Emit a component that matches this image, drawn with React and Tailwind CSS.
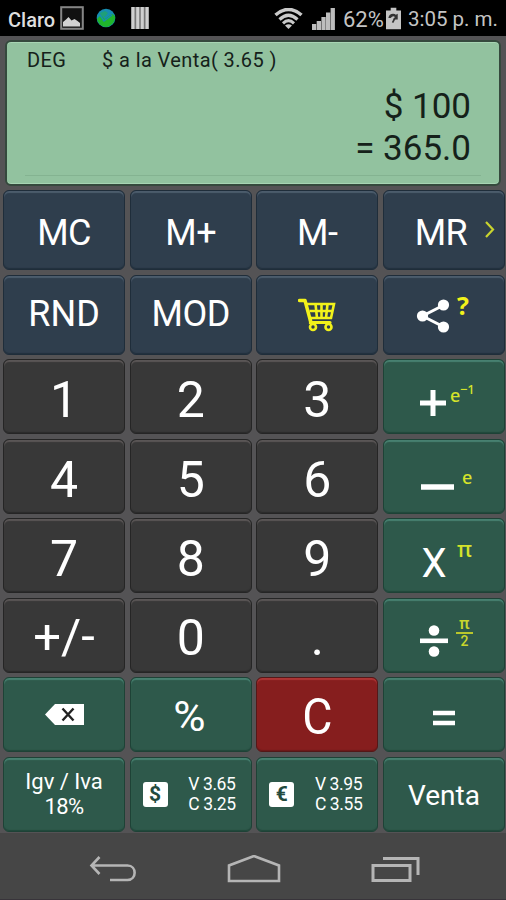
import React from 'react';
import clsx from 'clsx';

const KEY_STYLES = {
  blue: 'bg-[#2f3e4d] border-[#1f2d3a] shadow-[inset_0_2px_1px_#4c5c6c,inset_0_-1px_1px_#22303d]',
  dark: 'bg-[#383838] border-[#252525] shadow-[inset_0_2px_1px_#5a5656,inset_0_-1px_1px_#2b2b2b]',
  green: 'bg-[#2e594b] border-[#1e4236] shadow-[inset_0_2px_1px_#478070,inset_0_-1px_1px_#21473b]',
  red: 'bg-[#861e1e] border-[#541818] shadow-[inset_0_2px_1px_#ad3535,inset_0_-1px_1px_#6b1919]',
};

function Key({ tone, className, children }) {
  return (
    <button
      type="button"
      className={clsx(
        'relative flex items-center justify-center rounded-[6px] border text-white leading-none whitespace-nowrap',
        KEY_STYLES[tone],
        className
      )}
    >
      {children}
    </button>
  );
}

function StatusBar() {
  return (
    <header className="h-[36px] shrink-0 bg-black flex items-center text-[#c4c4c4] pt-[3px] pl-[8px] pr-[8px]">
      <span className="w-[47px] text-[20px] font-medium text-[#dedede] leading-none">Claro</span>
      <svg className="ml-[5px] mb-[3px]" width="24" height="24" viewBox="0 0 24 24">
        <rect x="1.2" y="1.2" width="21.6" height="21.6" fill="#111" stroke="#858585" strokeWidth="2" />
        <path d="M3 20.5v-4.500l3-2.500 2.500-2.500 3 3.500 3-1.500 3 2 2.500 2v3.500z" fill="#d2d2d2" />
      </svg>
      <svg className="ml-[12px] mb-[3px]" width="20" height="20" viewBox="0 0 20 20">
        <circle cx="10" cy="10" r="9.300" fill="#168db0" />
        <path d="M1 11l4-4 4 4 7-5 3 2c1 5-4 11-9 11-5 0-8-4-9-8z" fill="#20b52c" />
        <path d="M4 5l5-2 3 2-3 4-4-1z" fill="#1f9f78" />
        <path d="M4 7l4 6 8-6" fill="none" stroke="#168db0" strokeWidth="1.500" />
      </svg>
      <svg className="ml-[15px] mb-[3px]" width="19" height="22" viewBox="0 0 19 22">
        <rect width="18" height="22" fill="#777" />
        <path d="M2 0v22M6.700 0v22M11.300 0v22M16 0v22" stroke="#d0d0d0" strokeWidth="3" />
      </svg>
      <div className="flex-1" />
      <svg className="mr-[1px] mb-[2px]" width="29" height="22" viewBox="0 0 29 22" fill="none" stroke="#c9c9c9">
        <path d="M1.500 7Q14.500-4 27.500 7" strokeWidth="3.600" />
        <path d="M5.500 11.500Q14.500 3 23.500 11.500" strokeWidth="3.200" />
        <path d="M9 15.300Q14.500 10 20 15.300" strokeWidth="3" />
        <path d="M11 17.500Q14.500 15 18 17.500L14.500 21z" fill="#c9c9c9" stroke="none" />
      </svg>
      <svg className="ml-[8px] mb-[2px]" width="23" height="22" viewBox="0 0 23 22" fill="#bdbdbd">
        <rect x="0" y="16" width="4.300" height="6" />
        <rect x="4.700" y="13" width="4.300" height="9" />
        <rect x="9.400" y="9" width="4.300" height="13" />
        <rect x="14" y="4.500" width="4.300" height="17.500" />
        <rect x="18.600" y="0" width="4.300" height="22" />
      </svg>
      <span className="ml-[8px] w-[43px] text-[22px] leading-none">62%</span>
      <svg className="mb-[3px]" width="15" height="23" viewBox="0 0 16 23">
        <path d="M5 0h6v3h5v20H0V3h5z" fill="#c4c4c4" />
        <path d="M2.500 11q1-4.500 5-4.500 2 0 3 1l2-1v6H7.500l2-2.500q-2-2-4.500 1z" fill="#333" />
        <path d="M9.500 11l-2.500 5" stroke="#333" strokeWidth="1.800" />
      </svg>
      <span className="ml-[7px] text-[20.5px] leading-none">3:05 p. m.</span>
    </header>
  );
}

function Display() {
  return (
    <section className="mx-[5px] mt-[4px] h-[146px] shrink-0 rounded-[6px] border-2 border-[#35493d] bg-[#92c29f] text-[#15211a] shadow-[inset_0_1px_0_#a7d5b3,inset_0_-1px_0_#a7d5b3] flex flex-col px-[18px]">
      <div className="flex gap-[34px] mt-[6px] pl-[2px] text-[20px] leading-[24px]">
        <span className="w-[41px] tracking-[0.4px]">DEG</span>
        <span className="whitespace-pre tracking-[0.4px]">$ a la Venta( 3.65 )</span>
      </div>
      <div className="mt-[14px] pr-[10px] text-right text-[35px] leading-[42px]">
        <div>$ 100</div>
        <div>= 365.0</div>
      </div>
      <div className="mt-[5px] h-px bg-[#84b391]" />
    </section>
  );
}

function Rates({ symbol, sell, buy }) {
  return (
    <div className="w-full flex items-center pl-[12px] pr-[15px]">
      <span className="size-[25px] rounded-[3px] bg-white text-[#234a3e] text-[21px] font-bold leading-[25px] text-center">
        {symbol}
      </span>
      <span className="ml-auto text-left text-[17.5px] tracking-[-0.4px] leading-[20px]">
        V {sell}
        <br />C {buy}
      </span>
    </div>
  );
}

function Keypad() {
  return (
    <main className="grid grid-cols-4 grid-rows-[80px_80px_75px_75px_75px_75px_75px_75px] gap-[4.5px] mt-[4px] pl-[3px] pr-px">
      <Key tone="blue" className="text-[36px] pt-[6px] tracking-[-0.5px]">MC</Key>
      <Key tone="blue" className="text-[36px] pt-[6px] tracking-[-0.5px]">M+</Key>
      <Key tone="blue" className="text-[36px] pt-[6px] tracking-[-0.5px]">M-</Key>
      <Key tone="blue" className="text-[36px] pt-[6px] pr-[6px] tracking-[-0.5px]">
        MR
        <svg className="absolute right-[8px] top-[29px]" width="12" height="20" viewBox="0 0 12 20">
          <path d="M2 2l7 7.500-7 7.500" fill="none" stroke="#c9d42e" strokeWidth="2.200" />
        </svg>
      </Key>

      <Key tone="blue" className="text-[36px] pb-[2px]">RND</Key>
      <Key tone="blue" className="text-[36px] pb-[2px] tracking-[-0.5px]">MOD</Key>
      <Key tone="blue">
        <svg width="38" height="34" viewBox="0 0 38 34" fill="none" stroke="#f2f21a">
          <path d="M1.500 2.500h5.500l5.500 20.500" strokeWidth="3.500" strokeLinecap="round" strokeLinejoin="round" />
          <path d="M9 6h27l-3 14H13M11.500 13h23M17.500 6l1.500 14M23.500 6v14M29.500 6l-1.500 14" strokeWidth="2.600" />
          <path d="M12.500 20v4.500h19.500" strokeWidth="3.200" strokeLinecap="round" />
          <circle cx="15" cy="29" r="3" strokeWidth="2.600" />
          <circle cx="30.500" cy="29" r="3" strokeWidth="2.600" />
        </svg>
      </Key>
      <Key tone="blue">
        <svg className="mr-[22px] mt-[3px]" width="34" height="34" viewBox="0 0 34 34">
          <path d="M28 6L6.500 17 28 28" fill="none" stroke="#fff" strokeWidth="3" />
          <circle cx="6.500" cy="17" r="5.600" fill="#fff" />
          <circle cx="27.500" cy="6" r="5.600" fill="#fff" />
          <circle cx="27.500" cy="28" r="5.600" fill="#fff" />
        </svg>
        <span className="absolute left-[73px] top-[16px] font-['Open_Sans',sans-serif] font-bold text-[25px] leading-[26px] text-[#f2f21a]">?</span>
      </Key>

      <Key tone="dark" className="text-[50px] pt-[7px]">1</Key>
      <Key tone="dark" className="text-[50px] pt-[7px]">2</Key>
      <Key tone="dark" className="text-[50px] pt-[7px]">3</Key>
      <Key tone="green">
        <svg className="mr-[22px] mt-[13px]" width="26" height="26" viewBox="0 0 26 26">
          <path d="M13 0v26M0 13h26" stroke="#fff" strokeWidth="5" />
        </svg>
        <span className="absolute left-[66px] top-[25px] font-['Noto_Sans',sans-serif] font-medium text-[18px] leading-[20px] text-[#d6e32a]">e</span>
        <span className="absolute left-[76px] top-[22px] font-['Noto_Sans',sans-serif] font-medium text-[13px] leading-[15px] text-[#d6e32a]">−1</span>
      </Key>

      <Key tone="dark" className="text-[50px] pt-[7px]">4</Key>
      <Key tone="dark" className="text-[50px] pt-[7px]">5</Key>
      <Key tone="dark" className="text-[50px] pt-[7px]">6</Key>
      <Key tone="green">
        <svg className="mr-[13px] mt-[21px]" width="34" height="6" viewBox="0 0 34 6">
          <path d="M1 3h33" stroke="#fff" strokeWidth="5.500" />
        </svg>
        <span className="absolute left-[78px] top-[27px] font-['Noto_Sans',sans-serif] font-medium text-[18px] leading-[20px] text-[#d6e32a]">e</span>
      </Key>

      <Key tone="dark" className="text-[50px] pt-[7px]">7</Key>
      <Key tone="dark" className="text-[50px] pt-[7px]">8</Key>
      <Key tone="dark" className="text-[50px] pt-[7px]">9</Key>
      <Key tone="green" className="pr-[20px] pt-[17px] text-[40px]">
        X
        <span className="absolute left-[73px] top-[17px] font-['Noto_Sans',sans-serif] font-medium text-[22px] leading-[24px] text-[#d6e32a]">π</span>
      </Key>

      <Key tone="dark" className="text-[49px] pt-[3px]">+/-</Key>
      <Key tone="dark" className="text-[50px] pt-[6px]">0</Key>
      <Key tone="dark" className="text-[50px] pt-[5px]">.</Key>
      <Key tone="green">
        <svg className="mr-[20px] mt-[12px]" width="28" height="32" viewBox="0 0 28 32" fill="#fff">
          <circle cx="14" cy="5.500" r="5.300" />
          <rect x="0" y="13.500" width="28" height="4.600" />
          <circle cx="14" cy="26.500" r="5.300" />
        </svg>
        <span className="absolute left-[72px] top-[16px] w-[17px] flex flex-col items-center font-['Roboto',sans-serif] font-medium text-[15px] leading-[15px] text-[#c9d62c]">
          <span className="w-full text-center text-[17px] leading-[17px]">π</span>
          <span className="w-full h-[2px] shrink-0 bg-[#b9c62c]" />
          <span className="text-[14px] leading-[14px]">2</span>
        </span>
      </Key>

      <Key tone="green">
        <svg width="39" height="21" viewBox="0 0 39 21">
          <path d="M0 10.500L10 0h29v21H10z" fill="#fff" />
          <path d="M17.500 4.500l11 12M28.500 4.500l-11 12" stroke="#222" strokeWidth="2.400" />
        </svg>
      </Key>
      <Key tone="green" className="text-[42px] pt-[5px]"><span className="translate-x-[-1px] scale-x-105">%</span></Key>
      <Key tone="red" className="text-[50px] pt-[5px]"><span className="scale-x-[0.93]">C</span></Key>
      <Key tone="green">
        <svg className="mt-[6px]" width="22" height="16" viewBox="0 0 22 16">
          <path d="M0 3h22M0 13h22" stroke="#fff" strokeWidth="4.600" />
        </svg>
      </Key>

      <Key tone="green" className="text-[22px]">
        <span className="leading-[25px] text-center">
          Igv / Iva
          <br />
          <span className="tracking-[-0.6px]">18%</span>
        </span>
      </Key>
      <Key tone="green"><Rates symbol="$" sell="3.65" buy="3.25" /></Key>
      <Key tone="green"><Rates symbol="€" sell="3.95" buy="3.55" /></Key>
      <Key tone="green" className="text-[28px] pt-[3px]">Venta</Key>
    </main>
  );
}

function NavBar() {
  return (
    <nav className="mt-auto h-[67px] shrink-0 bg-[#464646] flex items-center pt-[8px] pl-[89px] pr-[86px] justify-between border-b border-[#38343a]">
      <svg width="48" height="28" viewBox="0 0 48 28" fill="none" stroke="#b5b5b5" strokeWidth="2.600">
        <path d="M10.500 1L2.500 9.500l8 8.500M2.500 9.500h36c9.500 0 9.500 14.500 0 14.500H21" />
      </svg>
      <svg width="54" height="30" viewBox="0 0 54 30" fill="none" stroke="#b5b5b5" strokeWidth="2.600">
        <path d="M2 26V10.500L27 1l25 9.500V26z" />
      </svg>
      <svg width="50" height="28" viewBox="0 0 50 28" fill="none" stroke="#b5b5b5" strokeWidth="3">
        <rect x="3" y="9.500" width="37" height="15" />
        <path d="M13 2.500h35V19" />
      </svg>
    </nav>
  );
}

export default function App() {
  return (
    <div className="w-[506px] h-[900px] overflow-hidden flex flex-col bg-[#545355] font-['Roboto',sans-serif]">
      <StatusBar />
      <Display />
      <Keypad />
      <NavBar />
    </div>
  );
}
